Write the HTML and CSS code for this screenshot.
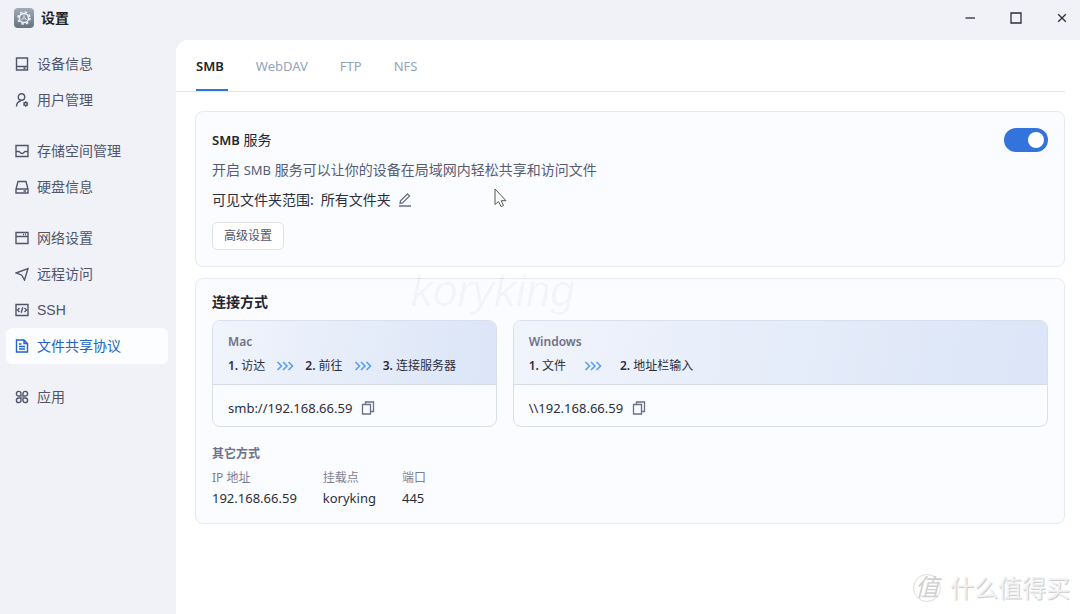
FILE: index.html
```html
<!DOCTYPE html>
<html lang="zh-CN">
<head>
  <meta charset="UTF-8">
  <meta name="viewport" content="width=device-width,initial-scale=1.0">
  <title>设置</title>
  <link rel="stylesheet" href="styles.css">
</head>
<body>
  <!-- shared shapes -->
  <svg class="defs" width="0" height="0" aria-hidden="true">
    <symbol id="i-copy" viewBox="0 0 14 14"><path d="M4.500 3.500V1h8v9.500H9.500M1.500 3.500h8v9.500h-8z"/></symbol>
    <symbol id="i-arrows" viewBox="0 0 18 10"><path d="M1.500 1l4 4-4 4M7 1l4 4-4 4M12.500 1l4 4-4 4"/></symbol>
  </svg>

  <header class="titlebar">
    <svg class="app-icon" viewBox="0 0 20 20">
      <defs><linearGradient id="g" x2="0" y2="1"><stop stop-color="#a0acb7"/><stop offset="1" stop-color="#64727f"/></linearGradient></defs>
      <rect width="20" height="20" rx="4" fill="url(#g)"/>
      <circle cx="10" cy="10" r="6" fill="none" stroke="#eef1f4" stroke-width="1.600" stroke-dasharray="2.400 2.312"/>
      <circle cx="10" cy="10" r="4.600" fill="none" stroke="#eef1f4" stroke-width="1.500"/>
      <path d="M10 6v3M7 12l1.500-1M13 12l-1.500-1M8.300 11l1.700-2.500 1.700 2.500z" fill="none" stroke="#dfe4e8" stroke-width=".8"/>
    </svg>
    <h1>设置</h1>
    <div class="window-buttons">
      <button aria-label="最小化"><svg viewBox="0 0 12 12"><path d="M1.500 6h9.500"/></svg></button>
      <button aria-label="最大化"><svg viewBox="0 0 12 12"><path d="M1 1h10v10H1z"/></svg></button>
      <button aria-label="关闭"><svg viewBox="0 0 12 12"><path d="M2.200 2.200l7.600 7.600M9.800 2.200L2.200 9.800"/></svg></button>
    </div>
  </header>

  <div class="layout">
    <nav class="sidebar">
      <div class="group">
        <a href="#device"><svg viewBox="0 0 14 14"><path d="M1.500 1h11v12h-11zM1.500 9.500h11M8.500 11.300h2"/></svg>设备信息</a>
        <a href="#users"><svg viewBox="0 0 14 14"><circle cx="6.500" cy="4" r="3.200"/><path d="M1.500 13.500c0-3 1.500-5 4.500-5.800"/><circle cx="10.700" cy="11" r="1.500"/><path d="M10.700 8.300v1M10.700 12.700v1M8.400 9.700l.9.500M12.100 11.800l.9.500M8.400 12.300l.9-.5M12.100 10.200l.9-.5"/></svg>用户管理</a>
      </div>
      <div class="group">
        <a href="#storage"><svg viewBox="0 0 14 14"><path d="M1 1.500h12v11H1zM1 7.500h3c.8 0 .8 2 3 2s2.200-2 3-2h3"/></svg>存储空间管理</a>
        <a href="#disk"><svg viewBox="0 0 14 14"><path d="M3 1.500h8l2 7.500v4H1V9zM1 9h12M8.500 11h2.500"/></svg>硬盘信息</a>
      </div>
      <div class="group">
        <a href="#network"><svg viewBox="0 0 14 14"><path d="M1 1.500h12v11H1zM1 5.500h12M8 3.500h1M10 3.500h1"/></svg>网络设置</a>
        <a href="#remote"><svg viewBox="0 0 14 14"><path d="M1 6l12-4.500L9.500 13 6.800 8.200z"/></svg>远程访问</a>
        <a href="#ssh"><svg viewBox="0 0 14 14"><path d="M1 1.500h12v11H1zM4.500 5l-2 2 2 2M9.500 5l2 2-2 2M7.800 4.300L6.200 9.700"/></svg>SSH</a>
        <a href="#share" class="active"><svg viewBox="0 0 14 14"><path d="M1.500 1h7.500l3.500 3.500V13h-11zM9 1v3.500h3.500M4 5h2.500M4 7.500h6M4 10h6"/></svg>文件共享协议</a>
      </div>
      <div class="group">
        <a href="#apps"><svg viewBox="0 0 14 14"><path d="M6 6H3.500A2.300 2.300 0 1 1 6 3.500zM8 6V3.500A2.300 2.300 0 1 1 10.500 6zM6 8v2.500A2.300 2.300 0 1 1 3.500 8zM8 8h2.500A2.300 2.300 0 1 1 8 10.500z"/></svg>应用</a>
      </div>
    </nav>

    <main>
      <div class="tabs">
        <button class="active">SMB</button>
        <button>WebDAV</button>
        <button>FTP</button>
        <button>NFS</button>
      </div>

      <section class="card service">
        <div class="service-head">
          <h2 id="smb-title"><b>SMB</b> 服务</h2>
          <input class="switch" type="checkbox" aria-labelledby="smb-title" checked>
        </div>
        <p class="desc">开启 <span class="latin">SMB</span> 服务可以让你的设备在局域网内轻松共享和访问文件</p>
        <p class="scope">可见文件夹范围: <span>所有文件夹</span>
          <button class="icon-btn" aria-label="编辑"><svg viewBox="0 0 14 14"><path d="M1 13h12M2 10.500l.5-2.800L9.500 1l2 2-7 7z"/></svg></button>
        </p>
        <button class="advanced">高级设置</button>
      </section>

      <section class="card connect">
        <h2><b>连接方式</b></h2>
        <div class="methods">
          <div class="method">
            <div class="guide">
              <h3>Mac</h3>
              <div class="steps">
                <span><b>1.</b> 访达</span><svg><use href="#i-arrows"/></svg>
                <span><b>2.</b> 前往</span><svg><use href="#i-arrows"/></svg>
                <span><b>3.</b> 连接服务器</span>
              </div>
            </div>
            <div class="address">smb://192.168.66.59
              <button class="icon-btn" aria-label="复制"><svg><use href="#i-copy"/></svg></button>
            </div>
          </div>
          <div class="method">
            <div class="guide">
              <h3>Windows</h3>
              <div class="steps wide">
                <span><b>1.</b> 文件</span><svg><use href="#i-arrows"/></svg>
                <span><b>2.</b> 地址栏输入</span>
              </div>
            </div>
            <div class="address">\\192.168.66.59
              <button class="icon-btn" aria-label="复制"><svg><use href="#i-copy"/></svg></button>
            </div>
          </div>
        </div>
        <h3 class="other">其它方式</h3>
        <dl>
          <div><dt>IP 地址</dt><dd>192.168.66.59</dd></div>
          <div><dt>挂载点</dt><dd>koryking</dd></div>
          <div><dt>端口</dt><dd>445</dd></div>
        </dl>
      </section>
    </main>
  </div>

  <!-- overlays -->
  <div class="user-mark">koryking</div>
  <svg class="cursor" viewBox="0 0 14 20"><path d="M1 1v15.500l3.500-3 2.500 5 2.500-1-2.300-4.800H12z"/></svg>
  <div class="site-mark"><span>值</span>什么值得买</div>
</body>
</html>
```

FILE: styles.css
```css
* {
    box-sizing: border-box;
}
body {
    margin: 0;
    min-height: 100vh;
    display: flex;
    flex-direction: column;
    background: #f1f2f8;
    color: #2b2e3b;
    font-family: "Noto Sans", "Noto Sans CJK SC", sans-serif;
    font-size: 14px;
    line-height: 20px;
}
h1, h2, h3, p, dl, dd {
    margin: 0;
}
button {
    padding: 0;
    border: none;
    background: none;
    color: inherit;
    font: inherit;
    cursor: pointer;
}
svg {
    flex: none;
    fill: none;
    stroke: currentColor;
}
.defs {
    position: absolute;
}

.titlebar {
    height: 40px;
    display: flex;
    align-items: center;
    padding: 0 11px 4px 14px;
}
.app-icon {
    width: 20px;
    height: 20px;
    stroke: none;
}
.titlebar h1 {
    margin-left: 7px;
    font-size: 14px;
    color: #1d1f2b;
}
.window-buttons {
    margin-left: auto;
    display: flex;
    gap: 32px;
}
.window-buttons button {
    display: flex;
    width: 14px;
    justify-content: center;
}
.window-buttons svg {
    width: 12px;
    height: 12px;
    stroke-width: 1.3;
}

.layout {
    flex: 1;
    display: flex;
}
.sidebar {
    width: 176px;
    flex: none;
    padding: 6px 8px 6px 6px;
    display: flex;
    flex-direction: column;
    gap: 15px;
    font-family: "Liberation Sans", "Noto Sans CJK SC", sans-serif;
}
.sidebar a {
    height: 36px;
    display: flex;
    align-items: center;
    gap: 8px;
    padding-left: 9px;
    border-radius: 6px;
    color: #50556a;
    text-decoration: none;
}
.sidebar svg {
    width: 14px;
    height: 14px;
    stroke-width: 1.4;
}
.sidebar a.active {
    background: #fcfdff;
    color: #2462c4;
}

main {
    flex: 1;
    min-width: 0;
    padding-right: 15px;
    border-top-left-radius: 12px;
    background: #fff;
}
.tabs {
    display: flex;
    gap: 28px;
    padding-left: 20px;
    border-bottom: 1px solid #e3e6f0;
}
.tabs button {
    height: 51px;
    padding: 3px 4px 0 0;
    border-bottom: 2px solid transparent;
    font-size: 13px;
    color: #93a3bd;
}
.tabs .active {
    border-color: #3273dc;
    font-weight: 600;
    color: #23252f;
}

.card {
    margin-left: 19px;
    padding: 16px;
    border: 1px solid #e7eaf3;
    border-radius: 8px;
    background: #fbfcff;
}
.card h2 {
    font-size: 14px;
    font-weight: 400;
    color: #23252f;
}
.card h2 b {
    font-weight: 600;
}
.card h3 {
    font-size: 12px;
    font-weight: 600;
    color: #6d7189;
}
.icon-btn {
    display: flex;
    color: #6b6f87;
}
.icon-btn svg {
    width: 14px;
    height: 14px;
    stroke-width: 1.3;
}

.service {
    margin-top: 19px;
}
.service-head {
    display: flex;
    align-items: center;
    justify-content: space-between;
}
.service-head b,
.latin {
    font-size: 13px;
}
.switch {
    appearance: none;
    width: 44px;
    height: 24px;
    margin: 0;
    padding: 4px;
    border-radius: 12px;
    background: #3273dc;
    cursor: pointer;
}
.switch::before {
    content: "";
    display: block;
    width: 16px;
    height: 16px;
    border-radius: 50%;
    background: #fff;
}
.switch:checked::before {
    margin-left: auto;
}
.desc {
    margin-top: 8px;
    color: #585c73;
}
.scope {
    display: flex;
    align-items: center;
    gap: 7px;
    margin-top: 10px;
}
.advanced {
    margin-top: 12px;
    padding: 3px 11px;
    border: 1px solid #dfe2ec;
    border-radius: 5px;
    background: #fff;
    font-size: 12px;
    color: #50556a;
}

.connect {
    margin-top: 11px;
    padding: 13px 16px 15px;
}
.methods {
    display: grid;
    grid-template-columns: 285fr 536fr;
    gap: 16px;
    margin-top: 8px;
}
.method {
    overflow: hidden;
    border: 1px solid #d9dfed;
    border-radius: 8px;
}
.guide {
    padding: 11px 15px 8px;
    border-bottom: 1px solid #d3dbed;
    background: linear-gradient(100deg, #f0f4fc, #dbe5f7);
}
.steps {
    display: flex;
    align-items: center;
    gap: 11px;
    margin-top: 4px;
    font-size: 12px;
}
.steps.wide {
    gap: 18px;
}
.steps svg {
    width: 18px;
    height: 10px;
    color: #5a9df5;
    stroke-width: 1.6;
}
.steps b {
    font-weight: 600;
}
.address {
    display: flex;
    align-items: center;
    gap: 9px;
    padding: 13px 15px 8px;
    font-size: 13px;
}
.card .other {
    margin-top: 17px;
}
dl {
    display: flex;
    gap: 26px;
    margin-top: 4px;
}
dt {
    font-size: 12px;
    color: #7b7f95;
}
dd {
    font-size: 13px;
}

/* floating marks */
.user-mark {
    position: absolute;
    top: 266px;
    left: 411px;
    font: italic 44px/50px "Liberation Sans", sans-serif;
    color: rgba(0, 0, 0, .04);
    pointer-events: none;
}
.cursor {
    position: absolute;
    top: 188px;
    left: 494px;
    width: 14px;
    height: 20px;
    fill: #fff;
    stroke: #555;
    pointer-events: none;
}
.site-mark {
    position: absolute;
    right: 10px;
    bottom: 10px;
    display: flex;
    align-items: center;
    gap: 9px;
    font-size: 24px;
    line-height: 32px;
    color: #f2f2f2;
    text-shadow: 1px 1px 0 #cdcdcd;
    pointer-events: none;
}
.site-mark span {
    width: 28px;
    height: 28px;
    border: 1px solid #ddd;
    border-radius: 50%;
    font-style: italic;
    line-height: 24px;
    text-align: center;
    color: #d0d0d0;
    text-shadow: none;
}
```
